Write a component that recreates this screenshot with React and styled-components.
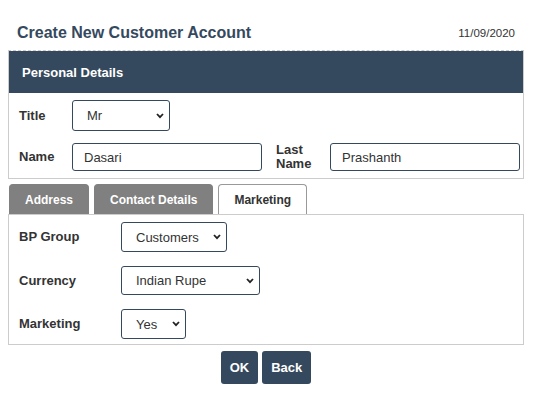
import React, { useState } from 'react';
import styled, { createGlobalStyle } from 'styled-components';

const GlobalStyle = createGlobalStyle`
  body {
    margin: 8px;
    font-family: "Liberation Sans", Arial, sans-serif;
    background: #fff;
    color: #333;
  }
`;

const navy = '#35495e';

const Page = styled.div`
  width: 516px;
`;

const TopBar = styled.div`
  display: flex;
  align-items: center;
  justify-content: space-between;
  height: 20px;
  padding: 15px 9px 7px;
`;

const PageTitle = styled.h1`
  margin: 0;
  font-size: 16px;
  font-weight: bold;
  color: ${navy};
`;

const DateText = styled.span`
  font-size: 11.5px;
  color: #333;
`;

const Panel = styled.div`
  border: 1px solid #ccc;
  border-top: 1px dashed #ccc;
`;

const PanelHeader = styled.div`
  height: 42px;
  display: flex;
  align-items: center;
  padding-left: 13px;
  background: ${navy};
  color: #fff;
  font-size: 13px;
  font-weight: bold;
`;

const PersonalBody = styled.div`
  display: flex;
  flex-direction: column;
  gap: 12px;
  padding: 7px 3px 7px 10px;
`;

const Row = styled.div`
  display: flex;
  align-items: center;
`;

const Label = styled.label`
  width: ${p => p.$w}px;
  margin-left: ${p => p.$ml || 0}px;
  flex-shrink: 0;
  font-size: 13px;
  font-weight: bold;
  color: #333;
  line-height: 14px;
`;

const TextInput = styled.input`
  box-sizing: border-box;
  width: ${p => p.$w}px;
  height: 28px;
  padding: 0 11px;
  border: 1px solid ${navy};
  border-radius: 3px;
  font-family: inherit;
  font-size: 13px;
  color: #333;
  outline: none;
`;

const SelectWrap = styled.div`
  position: relative;
  display: inline-flex;
`;

const Select = styled.select`
  box-sizing: border-box;
  appearance: none;
  width: ${p => p.$w}px;
  height: ${p => p.$h || 30}px;
  padding: 0 12px 0 14px;
  border: 1px solid ${navy};
  border-radius: 3px;
  background: #fff;
  font-family: inherit;
  font-size: 13px;
  color: #333;
  outline: none;
`;

const Chevron = styled.svg`
  position: absolute;
  right: 6px;
  top: 50%;
  margin-top: -3px;
  pointer-events: none;
`;

const TabBar = styled.div`
  display: flex;
  gap: 5px;
  padding-left: 1px;
  margin-top: 5px;
`;

const Tab = styled.button`
  box-sizing: border-box;
  height: 30px;
  padding: 0 15px;
  border: 1px solid ${p => (p.$active ? '#999' : '#808080')};
  border-bottom: none;
  border-radius: 4px 4px 0 0;
  background: ${p => (p.$active ? '#fff' : '#808080')};
  color: ${p => (p.$active ? '#333' : '#fff')};
  font-family: inherit;
  font-size: 12px;
  font-weight: bold;
  cursor: pointer;
`;

const TabBody = styled.div`
  border: 1px solid #ccc;
  display: flex;
  flex-direction: column;
  gap: 14px;
  padding: 7px 10px 5px;
`;

const Actions = styled.div`
  display: flex;
  justify-content: center;
  gap: 4px;
  margin-top: 6px;
`;

const Button = styled.button`
  height: 33px;
  padding: 0 9px;
  border: none;
  border-radius: 3px;
  background: ${navy};
  color: #fff;
  font-family: inherit;
  font-size: 13px;
  font-weight: bold;
  cursor: pointer;
`;

const Dropdown = ({ width, height, options, value }) => (
  <SelectWrap>
    <Select $w={width} $h={height} defaultValue={value}>
      {options.map(o => (
        <option key={o}>{o}</option>
      ))}
    </Select>
    <Chevron width="8" height="6" viewBox="0 0 8 6">
      <path d="M1 1 L4 4.2 L7 1" fill="none" stroke="#222" strokeWidth="1.8" />
    </Chevron>
  </SelectWrap>
);

const tabs = ['Address', 'Contact Details', 'Marketing'];

const App = () => {
  const [activeTab, setActiveTab] = useState('Marketing');

  return (
    <Page>
      <GlobalStyle />
      <TopBar>
        <PageTitle>Create New Customer Account</PageTitle>
        <DateText>11/09/2020</DateText>
      </TopBar>

      <Panel>
        <PanelHeader>Personal Details</PanelHeader>
        <PersonalBody>
          <Row>
            <Label $w={53}>Title</Label>
            <Dropdown width={98} height={31} value="Mr" options={['Mr', 'Mrs', 'Ms', 'Dr']} />
          </Row>
          <Row>
            <Label $w={53}>Name</Label>
            <TextInput $w={190} defaultValue="Dasari" />
            <Label $w={54} $ml={14}>Last<br />Name</Label>
            <TextInput $w={190} defaultValue="Prashanth" />
          </Row>
        </PersonalBody>
      </Panel>

      <TabBar>
        {tabs.map(t => (
          <Tab key={t} $active={t === activeTab} onClick={() => setActiveTab(t)}>
            {t}
          </Tab>
        ))}
      </TabBar>
      <TabBody>
        <Row>
          <Label $w={102}>BP Group</Label>
          <Dropdown width={106} value="Customers" options={['Customers', 'Vendors']} />
        </Row>
        <Row>
          <Label $w={102}>Currency</Label>
          <Dropdown width={139} height={29} value="Indian Rupe" options={['Indian Rupe', 'US Dollar']} />
        </Row>
        <Row>
          <Label $w={102}>Marketing</Label>
          <Dropdown width={65} value="Yes" options={['Yes', 'No']} />
        </Row>
      </TabBody>

      <Actions>
        <Button>OK</Button>
        <Button>Back</Button>
      </Actions>
    </Page>
  );
};

export default App;
